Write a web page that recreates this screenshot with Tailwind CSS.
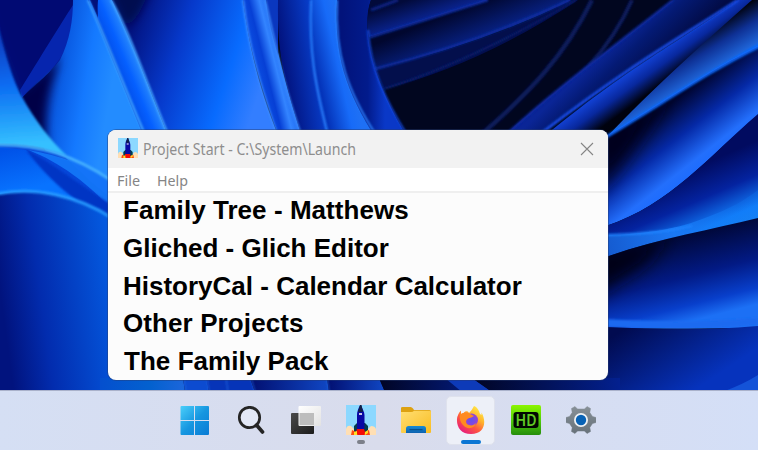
<!DOCTYPE html>
<html lang="en">
<head>
<meta charset="utf-8">
<title>Project Start</title>
<script src="https://cdn.jsdelivr.net/npm/@tailwindcss/browser@4"></script>
</head>
<body class="overflow-hidden">
<div class="relative flex h-[450px] w-[758px] flex-col overflow-hidden bg-[#01061f]">
  <!-- Wallpaper -->
  <svg class="absolute inset-0" width="758" height="450" viewBox="0 0 758 450" fill="none">
    <defs>
      <filter id="s1" filterUnits="userSpaceOnUse" x="-30" y="-30" width="820" height="510"><feGaussianBlur stdDeviation="0.8"/></filter>
      <filter id="s4" filterUnits="userSpaceOnUse" x="-30" y="-30" width="820" height="510"><feGaussianBlur stdDeviation="5"/></filter>
      <filter id="s9" filterUnits="userSpaceOnUse" x="-60" y="-60" width="880" height="570"><feGaussianBlur stdDeviation="9"/></filter>
      <linearGradient id="petalA" gradientUnits="userSpaceOnUse" x1="0" y1="25" x2="8" y2="145"><stop stop-color="#0631b4"/><stop offset=".5" stop-color="#0b6cf2"/><stop offset="1" stop-color="#35c0ff"/></linearGradient>
      <linearGradient id="petalB" gradientUnits="userSpaceOnUse" x1="26" y1="70" x2="112" y2="85"><stop stop-color="#010a5c"/><stop offset=".2" stop-color="#0430aa"/><stop offset=".42" stop-color="#0a5ce4"/><stop offset=".7" stop-color="#1479ff"/><stop offset="1" stop-color="#238cff"/></linearGradient>
      <linearGradient id="ribA" gradientUnits="userSpaceOnUse" x1="114" y1="68" x2="138" y2="58"><stop stop-color="#014be6"/><stop offset=".5" stop-color="#0560ff"/><stop offset="1" stop-color="#2a8bfc"/></linearGradient>
      <linearGradient id="petalC" gradientUnits="userSpaceOnUse" x1="128" y1="40" x2="262" y2="85"><stop stop-color="#021381"/><stop offset=".35" stop-color="#0639cb"/><stop offset=".75" stop-color="#086bfe"/><stop offset="1" stop-color="#337eff"/></linearGradient>
      <linearGradient id="ribB" gradientUnits="userSpaceOnUse" x1="256" y1="65" x2="284" y2="58"><stop stop-color="#0b4ce0"/><stop offset=".3" stop-color="#063fd5"/><stop offset=".65" stop-color="#3384ff"/><stop offset="1" stop-color="#1863ed"/></linearGradient>
      <linearGradient id="ribC" gradientUnits="userSpaceOnUse" x1="280" y1="50" x2="314" y2="45"><stop stop-color="#02127d"/><stop offset="1" stop-color="#073bc6"/></linearGradient>
      <linearGradient id="ribD" gradientUnits="userSpaceOnUse" x1="313" y1="55" x2="344" y2="48"><stop stop-color="#0433b9"/><stop offset=".7" stop-color="#176bf8"/><stop offset="1" stop-color="#1e70f5"/></linearGradient>
      <linearGradient id="ribE" gradientUnits="userSpaceOnUse" x1="342" y1="60" x2="385" y2="60"><stop stop-color="#02137b"/><stop offset=".6" stop-color="#021b8c"/><stop offset="1" stop-color="#0a38c7"/></linearGradient>
      <linearGradient id="lowL" gradientUnits="userSpaceOnUse" x1="0" y1="290" x2="112" y2="275"><stop stop-color="#01137e"/><stop offset=".35" stop-color="#022cae"/><stop offset="1" stop-color="#0459df"/></linearGradient>
      <linearGradient id="midL" gradientUnits="userSpaceOnUse" x1="5" y1="150" x2="15" y2="192"><stop stop-color="#0052e8"/><stop offset="1" stop-color="#0873ff"/></linearGradient>
      <linearGradient id="st1" gradientUnits="userSpaceOnUse" x1="408" y1="0" x2="416" y2="24"><stop stop-color="#020a3a"/><stop offset="1" stop-color="#0a2595"/></linearGradient>
      <linearGradient id="st2" gradientUnits="userSpaceOnUse" x1="440" y1="18" x2="452" y2="48"><stop stop-color="#01072f"/><stop offset="1" stop-color="#072080"/></linearGradient>
      <linearGradient id="bandA" gradientUnits="userSpaceOnUse" x1="590" y1="66" x2="622" y2="100"><stop stop-color="#0a2596"/><stop offset=".35" stop-color="#041a74"/><stop offset="1" stop-color="#020b45"/></linearGradient>
      <linearGradient id="bandB" gradientUnits="userSpaceOnUse" x1="628" y1="70" x2="654" y2="106"><stop stop-color="#1446df"/><stop offset=".35" stop-color="#08289d"/><stop offset=".7" stop-color="#00020f"/><stop offset="1" stop-color="#00010a"/></linearGradient>
      <linearGradient id="bandC" gradientUnits="userSpaceOnUse" x1="675" y1="48" x2="697" y2="84"><stop stop-color="#00020e"/><stop offset=".45" stop-color="#0e3094"/><stop offset=".9" stop-color="#1e64d8"/><stop offset="1" stop-color="#0a6cff"/></linearGradient>
      <linearGradient id="bandD" gradientUnits="userSpaceOnUse" x1="660" y1="112" x2="703" y2="167"><stop stop-color="#000532"/><stop offset=".45" stop-color="#0529a6"/><stop offset=".85" stop-color="#236ffc"/><stop offset="1" stop-color="#1d6cff"/></linearGradient>
      <linearGradient id="bandE" gradientUnits="userSpaceOnUse" x1="694" y1="168" x2="722" y2="232"><stop stop-color="#010b60"/><stop offset=".45" stop-color="#0423a0"/><stop offset=".85" stop-color="#117cf8"/><stop offset="1" stop-color="#157ff4"/></linearGradient>
      <linearGradient id="ribF" gradientUnits="userSpaceOnUse" x1="606" y1="245" x2="740" y2="215"><stop stop-color="#155bd0"/><stop offset=".5" stop-color="#1b78f4"/><stop offset="1" stop-color="#1281fb" stop-opacity=".2"/></linearGradient>
      <linearGradient id="bandG" gradientUnits="userSpaceOnUse" x1="650" y1="240" x2="672" y2="326"><stop stop-color="#000632"/><stop offset=".5" stop-color="#021a85"/><stop offset=".82" stop-color="#083fcb"/><stop offset="1" stop-color="#1c70f5"/></linearGradient>
      <linearGradient id="bandH" gradientUnits="userSpaceOnUse" x1="630" y1="325" x2="680" y2="400"><stop stop-color="#010b50"/><stop offset="1" stop-color="#0633bd"/></linearGradient>
      <linearGradient id="below" gradientUnits="userSpaceOnUse" x1="100" y1="0" x2="184" y2="0"><stop stop-color="#044fce"/><stop offset=".6" stop-color="#0361cf"/><stop offset="1" stop-color="#1c66db"/></linearGradient>
      <linearGradient id="fadeL"><stop stop-color="#020f70"/><stop offset="1" stop-color="#1047c4"/></linearGradient>
      <linearGradient id="fadeD"><stop stop-color="#010524"/><stop offset="1" stop-color="#03208f"/></linearGradient>
      <clipPath id="clipB"><path d="M73 0H88C103 32 122 82 145 135L160 220H80C60 170 30 130 22 98C50 70 72 62 73 0Z"/></clipPath>
      <clipPath id="clipC"><path d="M112 0H243C248 35 255 80 280 140H170C150 90 135 50 112 0Z"/></clipPath>
      <clipPath id="clipD"><path d="M758 47C710 70 660 105 606 137V226C670 205 710 155 758 115Z"/></clipPath>
      <clipPath id="clipG"><path d="M758 218C710 230 660 238 606 257V328H758Z"/></clipPath>
    </defs>
    <!-- Left side -->
    <rect width="130" height="400" fill="#010a73"/>
    <path d="M-30 -10 C-10 50 2 80 25 130L-30 130Z" fill="#0a49cf" filter="url(#s9)"/>
    <path d="M73 5C60 25 40 58 20 90L22 98C45 78 70 60 74 30Z" fill="#0625ae"/>
    <path d="M73 0H88C103 32 122 82 145 135L160 220H80C60 170 30 130 22 98C35 82 50 73 60 60C70 40 73 20 73 0Z" fill="url(#petalB)"/>
    <g clip-path="url(#clipB)"><path d="M15 97L60 58C50 85 42 110 48 150L25 130Z" fill="#010646" filter="url(#s4)"/></g>
    <path d="M-6 5C4 55 15 85 22 97C35 120 50 140 67 156C40 147 20 145 -6 145Z" fill="url(#petalA)" filter="url(#s1)"/>
    <path d="M0 145C40 145 72 155 112 183V225H0Z" fill="#0546d8"/>
    <path d="M28 150C60 155 90 166 112 183V210C90 185 60 162 28 150Z" fill="#1273f5"/>
    <path d="M0 147L26 150C45 165 62 182 82 200H0Z" fill="url(#midL)"/>
    <path d="M26 150C45 158 72 180 112 205V222C72 202 45 175 26 150Z" fill="#0336c4" filter="url(#s1)"/>
    <path d="M65 157C82 174 98 190 112 198V182C98 170 82 162 65 157Z" fill="#1474f8"/>
    <path d="M-4 145C40 144 75 156 112 181" stroke="#4bb7ff" stroke-width="2.5" filter="url(#s1)"/>
    <path d="M0 194C35 186 80 197 112 219V400H0Z" fill="url(#lowL)"/>
    <path d="M-4 194C35 186 78 196 112 218" stroke="#259aff" stroke-width="3" filter="url(#s1)"/>
    <!-- Top folds -->
    <path d="M88 0H104L160 140H145Z" fill="#0549dd"/>
    <path d="M90 0H98C97 8 98 14 98 18Z" fill="#02107a"/>
    <path d="M98 0H112C122 12 130 40 170 140H146C125 85 108 40 98 18Z" fill="url(#ribA)"/>
    <path d="M112 0H243C248 35 255 80 280 140H170C150 90 135 50 112 0Z" fill="url(#petalC)"/>
    <g clip-path="url(#clipC)"><path d="M105 -15H152C142 12 136 20 126 28Z" fill="#010750" filter="url(#s4)"/></g>
    <path d="M88 0C103 32 122 82 145 135" stroke="#3da0ff" stroke-width="2.5" filter="url(#s1)"/>
    <path d="M111 0C128 30 140 66 168 135" stroke="#42a2ff" stroke-width="2.5" filter="url(#s1)"/>
    <path d="M243 0C248 42 258 80 280 140H303C285 85 276 45 266 0Z" fill="url(#ribB)"/>
    <path d="M266 0H278V55C272 35 268 18 266 0Z" fill="#0a37bf"/>
    <path d="M278 0H312C310 50 316 85 330 140H303C284 80 277 55 278 0Z" fill="url(#ribC)"/>
    <path d="M311 0H337C334 55 350 95 378 140H330C315 85 309 50 311 0Z" fill="url(#ribD)"/>
    <path d="M337 0H371C361 30 372 80 409 140H377C345 90 334 55 337 0Z" fill="url(#ribE)"/>
    <path d="M243 0C248 42 258 80 279 140M265 0C276 45 280 75 301 135" stroke="#3e8eff" stroke-width="2" filter="url(#s1)"/>
    <path d="M311 0C309 50 315 85 328 135M337 0C334 55 348 92 376 135" stroke="#2c83ff" stroke-width="2" filter="url(#s1)"/>
    <!-- Dark centre -->
    <path d="M371 0H490L369 37C366 25 367 10 371 0Z" fill="url(#st1)"/>
    <path d="M488 0H572Q480 45 375 69L369 37Z" fill="url(#st2)"/>
    <path d="M572 0H578Q480 65 384 89L375 69Q490 42 572 0Z" fill="#030f4c"/>
    <path d="M370 37L488 0M375 69Q480 42 570 0" stroke="#0d2da3" stroke-width="2.5" filter="url(#s1)"/>
    <path d="M371 10Q382 6 398 0" stroke="#08217f" stroke-width="3" filter="url(#s1)"/>
    <path d="M384 89Q470 62 576 0" stroke="#091f6c" stroke-width="2" filter="url(#s1)"/>
    <path d="M368 30C370 68 385 100 407 135" stroke="#1247db" stroke-width="2" filter="url(#s1)"/>
    <path d="M592 0C565 55 530 92 483 133" stroke="#091b5c" stroke-width="4.500" filter="url(#s1)"/>
    <path d="M632 0C610 50 575 85 520 128" stroke="#091b5c" stroke-width="4" filter="url(#s1)"/>
    <!-- Right side -->
    <path d="M673 0H740C680 38 630 68 540 135H505C560 85 610 50 673 0Z" fill="url(#bandA)"/>
    <path d="M673 0C610 50 560 85 508 133" stroke="#0c2b9c" stroke-width="2.5" filter="url(#s1)"/>
    <path d="M738 0H758V60L610 140H540C630 65 680 42 738 0Z" fill="url(#bandB)"/>
    <path d="M738 0C680 38 630 65 543 132" stroke="#1549e0" stroke-width="3" filter="url(#s1)"/>
    <path d="M752 0H758V47C710 70 660 105 606 138Q650 90 752 0Z" fill="url(#bandC)"/>
    <path d="M758 47C710 70 660 105 606 137V226C670 205 710 155 758 115Z" fill="url(#bandD)"/>
    <g clip-path="url(#clipD)"><path d="M596 130L668 96L625 160L596 195Z" fill="#00021c" filter="url(#s9)"/></g>
    <path d="M762 45C710 70 660 105 606 137" stroke="#0a68fa" stroke-width="3" filter="url(#s1)"/>
    <path d="M758 114C710 155 670 205 606 226V262L758 222Z" fill="url(#bandE)"/>
    <path d="M606 235C650 234 680 228 705 218C730 209 745 200 758 190V219L690 236L606 257Z" fill="url(#ribF)"/>
    <path d="M606 235C650 234 672 231 692 226" stroke="#1f83ff" stroke-width="2" filter="url(#s1)"/>
    <path d="M758 218C710 230 660 238 606 257V328H758Z" fill="url(#bandG)"/>
    <g clip-path="url(#clipG)"><path d="M590 250L670 235L645 265L590 300Z" fill="#000216" filter="url(#s9)"/></g>
    <path d="M606 319C660 322 700 322 758 318V325C700 331 655 329 606 327Z" fill="#1d6af0" filter="url(#s1)"/>
    <path d="M606 327C655 329 700 331 758 326V400H606Z" fill="url(#bandH)"/>
    <path d="M722 392Q742 385 758 375V392Z" fill="#1453d8"/>
    <!-- Strip below the window -->
    <path d="M100 378H183L185 392H100Z" fill="url(#below)"/>
    <path d="M183 378H207L209 392H185Z" fill="#0c4bd0"/>
    <path d="M206 378H250L255 392H209Z" fill="#0634b8"/>
    <path d="M250 378H327L329 392H255Z" fill="url(#fadeL)"/>
    <path d="M327 378H379L385 392H329Z" fill="url(#fadeL)"/>
    <path d="M379 378H472L492 392H385Z" fill="url(#fadeD)"/>
    <path d="M445 378H472L492 392H462Z" fill="#0d3ab8"/>
    <path d="M472 378H620V392H492Z" fill="url(#fadeD)"/>
    <path d="M184 378L186 392M207 378L209 392M226 378L228 392M251 378L255 392M327 378L329 392" stroke="#1f65df" filter="url(#s1)"/>
  </svg>

  <!-- Application window -->
  <main class="relative mt-[130px] ml-[108px] flex h-[250px] w-[500px] flex-col overflow-hidden rounded-[8px] bg-[#fcfcfc] shadow-[0_0_0_1px_rgba(40,60,110,0.45)]">
    <header class="flex h-[38px] shrink-0 items-center bg-[#f2f2f2] pr-[14px] pl-[10px]">
      <svg class="-mt-0.5" width="20" height="20" viewBox="0 0 30 30"><use href="#rocket"/></svg>
      <svg class="ml-[5px] overflow-visible" width="224" height="24" fill="#8e8e8e"><text x="0" y="17.500" font-family="Noto Sans, sans-serif" font-size="16" textLength="213" lengthAdjust="spacingAndGlyphs">Project Start - C:\System\Launch</text></svg>
      <svg class="ml-auto" width="14" height="14" viewBox="0 0 14 14" fill="none" stroke="#858585" stroke-width="1.1"><path d="M1 1L13 13M13 1L1 13"/></svg>
    </header>
    <nav class="flex h-[25px] shrink-0 border-b-2 border-[#efefef] bg-white pl-[9px] text-[#858585]">
      <svg class="overflow-visible" width="24" height="23" fill="currentColor"><text x="0" y="18" font-family="Noto Sans, sans-serif" font-size="15" textLength="23" lengthAdjust="spacingAndGlyphs">File</text></svg>
      <svg class="ml-4 overflow-visible" width="32" height="23" fill="currentColor"><text x="0" y="18" font-family="Noto Sans, sans-serif" font-size="15" textLength="31" lengthAdjust="spacingAndGlyphs">Help</text></svg>
    </nav>
    <ul class="-mt-[0.5px] flex flex-col pl-[15px] font-['Liberation_Sans',Arial,sans-serif] text-[26px] leading-[37.5px] font-bold whitespace-nowrap text-black">
      <li class="-mt-[0.5px] mb-[0.5px] tracking-[0.05px]">Family Tree - Matthews</li>
      <li>Gliched - Glich Editor</li>
      <li>HistoryCal - Calendar Calculator</li>
      <li class="tracking-[0.1px]">Other Projects</li>
      <li class="pl-px tracking-[0.05px]">The Family Pack</li>
    </ul>
  </main>

  <!-- Taskbar -->
  <footer class="relative mt-auto flex h-[60px] items-center justify-center border-t border-[#aab2cb] bg-linear-to-r from-[#d5dff4] via-[#d9dcec] to-[#d4dff7]">
    <div class="flex h-full gap-[7px] pl-[20px]">
      <div class="-ml-px flex w-[47px] items-center justify-center">
        <svg class="mr-0.5" width="30" height="30" viewBox="0 0 30 30"><defs><linearGradient id="win" x1="0" y1="0" x2="30" y2="30" gradientUnits="userSpaceOnUse"><stop stop-color="#4bd0fb"/><stop offset=".5" stop-color="#1696e0"/><stop offset="1" stop-color="#0879d4"/></linearGradient></defs><path fill="url(#win)" d="M1.500 0H14V14H.5V1Q.5 0 1.500 0ZM15 0H28Q29 0 29 1V14H15ZM.5 15H14V29H1.500Q.5 29 .5 28ZM15 15H29V28Q29 29 28 29H15Z"/></svg>
      </div>
      <div class="flex w-12 items-center justify-center">
        <svg width="30" height="30" viewBox="0 0 30 30" fill="none" stroke="#252525"><circle cx="13.500" cy="11.5" r="10.2" stroke-width="2.7" fill="#e3e8f6"/><path d="M20.500 19L26.5 26" stroke-width="3.600" stroke-linecap="round"/></svg>
      </div>
      <div class="flex w-12 items-center justify-center">
        <svg class="mb-0.5" width="30" height="30" viewBox="0 0 30 30"><defs><linearGradient id="tvd" x1="0" y1="0" x2="1" y2="1"><stop stop-color="#4a4a4a"/><stop offset="1" stop-color="#1c1c1c"/></linearGradient><linearGradient id="tvl" x1="0" y1="0" x2="1" y2="1"><stop stop-color="#fff"/><stop offset="1" stop-color="#e2e2e2"/></linearGradient></defs><rect x="0" y="8" width="23" height="21" rx="1" fill="url(#tvd)"/><rect x="7.5" y="1" width="22.5" height="20" rx="1" fill="url(#tvl)"/><path d="M8.500 8H23V20H8.500Z" fill="#bdbdbd"/></svg>
      </div>
      <div class="relative flex w-12 items-center justify-center">
        <svg class="mb-0.5" width="30" height="30" viewBox="0 0 30 30">
          <g id="rocket">
            <rect width="30" height="30" fill="#8cd8ff"/>
            <path d="M0 30V24Q1 20 5 21Q8 23 9 27V30ZM30 30V24Q29 21 25 21Q22 23 21 27V30Z" fill="#ffdfb4"/>
            <path d="M11 18L8 21V27H22V21L19 18Z" fill="#043b4c"/>
            <path d="M14.200 0C12 4 11 7 11 10V24H18.500V10C18.500 7 16.500 4 14.800 0Z" fill="#0808a4"/>
            <path d="M14 0H15.500L17 7H12Z" fill="#102047"/>
            <rect x="13" y="8" width="3" height="2" fill="#c8c8e0"/>
            <path d="M11 24H18L20 30H9Z" fill="#f40b08"/>
            <path d="M6 25L10 27L12 30H5ZM23 25L19 27L18 30H24Z" fill="#ff4a10"/>
            <path d="M8 27L11 26V30H8ZM19 27L22 25V28L19 30Z" fill="#ffdf22"/>
          </g>
        </svg>
        <span class="absolute bottom-[6px] left-[20px] h-1 w-2 rounded-full bg-[#7d808a]"></span>
      </div>
      <div class="flex w-12 items-center justify-center">
        <svg class="mb-0.5" width="30" height="28" viewBox="0 0 30 28"><defs><linearGradient id="fold" x1="0" y1="0" x2="1" y2="1"><stop stop-color="#ffde72"/><stop offset="1" stop-color="#f9bd22"/></linearGradient><linearGradient id="fb" x1="0" y1="0" x2="0" y2="1"><stop stop-color="#168ad5"/><stop offset="1" stop-color="#0d62b0"/></linearGradient></defs><path d="M0 2Q0 1 1.500 1H9.500Q11 1 12 2.500L13 4H28.500Q30 4 30 5.500V12H0Z" fill="#dda111"/><path d="M0 6H10Q12 6 13 4.700H29Q30 4.700 30 6V26Q30 27 29 27H1Q0 27 0 26Z" fill="url(#fold)"/><path d="M5 27V22.500Q5 20 7.500 20H22.500Q25 20 25 22.500V27Z" fill="url(#fb)"/><path d="M9 23.700H21" stroke="#07508e" stroke-width="1.300" stroke-linecap="round"/></svg>
      </div>
      <div class="relative -ml-px mt-[5px] mb-[5px] flex w-[49px] items-center justify-center rounded-[5px] border border-[#dfe2ed] bg-[#edf0f8]">
        <svg class="mb-0.5 ml-0.5" width="30" height="30" viewBox="0 0 30 30"><defs><linearGradient id="ff" x1="25" y1="3" x2="7" y2="27" gradientUnits="userSpaceOnUse"><stop stop-color="#fff04b"/><stop offset=".35" stop-color="#ffb32b"/><stop offset=".65" stop-color="#ff583d"/><stop offset="1" stop-color="#e7207a"/></linearGradient><radialGradient id="ffp"><stop stop-color="#6150ed"/><stop offset="1" stop-color="#9643d6"/></radialGradient></defs><path d="M18 1C21 2 23 5 24 9L25.500 10V7.500C31 17 28.500 29 15 29C5 29 .5 22 1 14Q1.500 9 5 5.500V9L7.500 8C9 6 12 5.500 13 8C15 6 16.500 4 18 1Z" fill="url(#ff)"/><circle cx="15.500" cy="15" r="6.500" fill="url(#ffp)"/><path d="M5 6V9C9 7 12 7 14 9L18 11Q15 13 13.500 13C9 14 9 19 13 20C16 21 18 20 20 18C19 23 12 25 8 21C3 17 3 10 5 6Z" fill="#ff8a20"/></svg>
        <span class="absolute bottom-0 left-[14px] h-1 w-5 rounded-full bg-[#0b76d4]"></span>
      </div>
      <div class="flex w-12 items-center justify-center">
        <svg class="mb-0.5" width="30" height="30" viewBox="0 0 30 30"><defs><linearGradient id="hd" x1="0" y1="0" x2="0" y2="1"><stop stop-color="#8cf500"/><stop offset=".5" stop-color="#51cf0a"/><stop offset="1" stop-color="#258c0c"/></linearGradient></defs><rect width="30" height="30" rx="2" fill="url(#hd)"/><rect x="2.500" y="7" width="25" height="16" rx="3" fill="#020702"/><text x="15" y="20.500" text-anchor="middle" font-family="Noto Sans, sans-serif" font-size="15.500" font-weight="600" fill="#5fc925" textLength="21" lengthAdjust="spacingAndGlyphs">HD</text></svg>
      </div>
      <div class="flex w-12 items-center justify-center">
        <svg class="mb-0.5" width="30" height="30" viewBox="0 0 30 30"><defs><linearGradient id="gear" x1="0" y1="0" x2="0" y2="1"><stop stop-color="#879097"/><stop offset="1" stop-color="#68727a"/></linearGradient></defs><path d="M9 1.500L11.500 4H18.500L21 1.500L24.500 3.500L23.800 7.500L26.500 11.500L30 12.500V17.500L26.500 18.500L23.800 22.500L24.500 26.500L21 28.500L18.500 26H11.500L9 28.500L5.500 26.500L6.200 22.500L3.500 18.500L0 17.500V12.500L3.500 11.500L6.200 7.500L5.500 3.500Z" fill="url(#gear)" stroke="url(#gear)" stroke-width=".5" stroke-linejoin="round"/><circle cx="15" cy="15" r="7" fill="#eef1f4"/><circle cx="15" cy="15" r="5.200" fill="#0862b5"/></svg>
      </div>
    </div>
  </footer>
</div>
</body>
</html>
